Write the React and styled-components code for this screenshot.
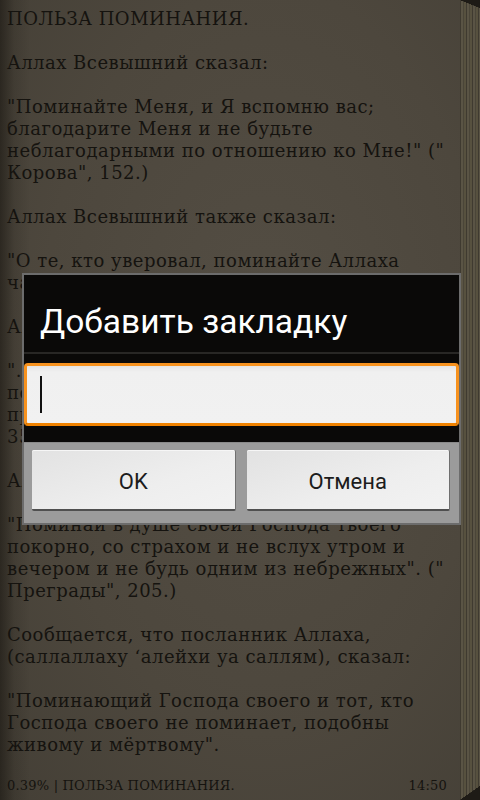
import React from "react";
import styled, { createGlobalStyle } from "styled-components";

const Global = createGlobalStyle`
  html, body { margin: 0; padding: 0; width: 480px; height: 800px; overflow: hidden; background: #4a453c; }
  #root { width: 480px; height: 800px; }
`;

const Screen = styled.div`
  position: relative;
  width: 480px;
  height: 800px;
  display: flex;
  overflow: hidden;
  background:
    linear-gradient(90deg, rgba(20,17,12,0.55) 0px, rgba(20,17,12,0.15) 14px, rgba(20,17,12,0) 30px),
    radial-gradient(ellipse at 55% 45%, #544e44 0%, #4d473d 60%, #443f36 100%);
`;

const Sheet = styled.div`
  flex: 1;
  display: flex;
  flex-direction: column;
  min-width: 0;
`;

const Body = styled.div`
  flex: 1;
  overflow: hidden;
  padding: 8px 0 0 7px;
  font-family: "DejaVu Serif", serif;
  font-size: 18px;
  letter-spacing: 0.5px;
  line-height: 22px;
  color: #15130f;
`;

const Para = styled.p`
  margin: 0 0 22px 0;
  white-space: nowrap;
`;

const Footer = styled.div`
  height: 30px;
  box-sizing: border-box;
  display: flex;
  align-items: flex-start;
  justify-content: space-between;
  padding: 8px 13px 0 7px;
  font-family: "DejaVu Serif", serif;
  font-size: 13px;
  letter-spacing: 0.2px;
  color: #15130f;
`;

const Edge = styled.div`
  position: relative;
  width: 20px;
  flex: none;
  background: repeating-linear-gradient(
    90deg,
    #3f3a30 0px, #3f3a30 1px,
    #5a5445 1px, #5a5445 3px,
    #4a4538 3px, #4a4538 4px,
    #57513f 4px, #57513f 6px
  );
  &::before {
    content: "";
    position: absolute;
    top: 0; left: 0; right: 0;
    height: 8px;
    background: linear-gradient(to bottom left, #1e1b16 50%, transparent 51%);
  }
  &::after {
    content: "";
    position: absolute;
    bottom: 0; left: 0; right: 0;
    height: 14px;
    background: linear-gradient(to top left, #1e1b16 50%, transparent 51%);
  }
`;

const Dialog = styled.div`
  position: absolute;
  left: 22px;
  top: 273px;
  width: 439px;
  box-sizing: border-box;
  border: 2px solid #6c6c6c;
  display: flex;
  flex-direction: column;
  background: #0a0908;
`;

const Title = styled.div`
  height: 79px;
  display: flex;
  align-items: flex-start;
  padding: 27px 0 0 16px;
  box-sizing: border-box;
  font-family: Roboto, "Noto Sans", sans-serif;
  font-size: 33.5px;
  line-height: normal;
  color: #ffffff;
  border-bottom: 2px solid #282725;
`;

const InputArea = styled.div`
  height: 88px;
  box-sizing: border-box;
  padding: 9px 0 0 0;
`;

const Input = styled.div`
  height: 63px;
  box-sizing: border-box;
  border: 3px solid #f7921e;
  border-bottom-color: #f08200;
  border-radius: 4px;
  background: linear-gradient(#e4e4e4, #f0f0f0 6px, #f1f1f1);
  display: flex;
  align-items: center;
  padding-left: 13px;
`;

const Caret = styled.div`
  width: 2px;
  height: 37px;
  background: #111;
`;

const ButtonBar = styled.div`
  height: 81px;
  box-sizing: border-box;
  background: #9b9b9b;
  border-top: 1px solid #8a8a8a;
  display: grid;
  grid-template-columns: 1fr 1fr;
  gap: 11px;
  padding: 7px 9px 12px 8px;
`;

const Button = styled.div`
  border-radius: 2px;
  background: linear-gradient(160deg, #e2e2e2, #eeeeee 60%, #f2f2f2);
  border-bottom: 2px solid #4f4f4f;
  border-right: 1px solid #6f6f6f;
  box-shadow: inset 0 1px 0 #f6f6f6;
  display: flex;
  align-items: center;
  justify-content: center;
  padding-top: 3px;
  font-family: Roboto, "Noto Sans", sans-serif;
  font-size: 22px;
  color: #1c1c1c;
`;

const paragraphs = [
  ["ПОЛЬЗА ПОМИНАНИЯ."],
  ["Аллах Всевышний сказал:"],
  [
    "\"Поминайте Меня, и Я вспомню вас;",
    "благодарите Меня и не будьте",
    "неблагодарными по отношению ко Мне!\" (\"",
    "Корова\", 152.)",
  ],
  ["Аллах Всевышний также сказал:"],
  ["\"О те, кто уверовал, поминайте Аллаха", "часто...\" (\"Сонмы\", 41.)"],
  ["Аллах Всевышний также сказал:"],
  [
    "\"...и мужчинам и женщинам, которые много",
    "поминают Аллаха, Аллах уготовил",
    "прощение и великую награду\" (\"Сонмы\",",
    "35).",
  ],
  ["Аллах Всевышний сказал:"],
  [
    "\"Поминай в душе своей Господа твоего",
    "покорно, со страхом и не вслух утром и",
    "вечером и не будь одним из небрежных\". (\"",
    "Преграды\", 205.)",
  ],
  ["Сообщается, что посланник Аллаха,", "(саллаллаху ‘алейхи уа саллям), сказал:"],
  [
    "\"Поминающий Господа своего и тот, кто",
    "Господа своего не поминает, подобны",
    "живому и мёртвому\".",
  ],
];

export default function App() {
  return (
    <>
      <Global />
      <Screen>
        <Sheet>
          <Body>
            {paragraphs.map((lines, i) => (
              <Para key={i}>
                {lines.map((l, j) => (
                  <React.Fragment key={j}>
                    {j > 0 && <br />}
                    {l}
                  </React.Fragment>
                ))}
              </Para>
            ))}
          </Body>
          <Footer>
            <span>0.39% | ПОЛЬЗА ПОМИНАНИЯ.</span>
            <span>14:50</span>
          </Footer>
        </Sheet>
        <Edge />
        <Dialog>
          <Title>Добавить закладку</Title>
          <InputArea>
            <Input>
              <Caret />
            </Input>
          </InputArea>
          <ButtonBar>
            <Button>OK</Button>
            <Button>Отмена</Button>
          </ButtonBar>
        </Dialog>
      </Screen>
    </>
  );
}
